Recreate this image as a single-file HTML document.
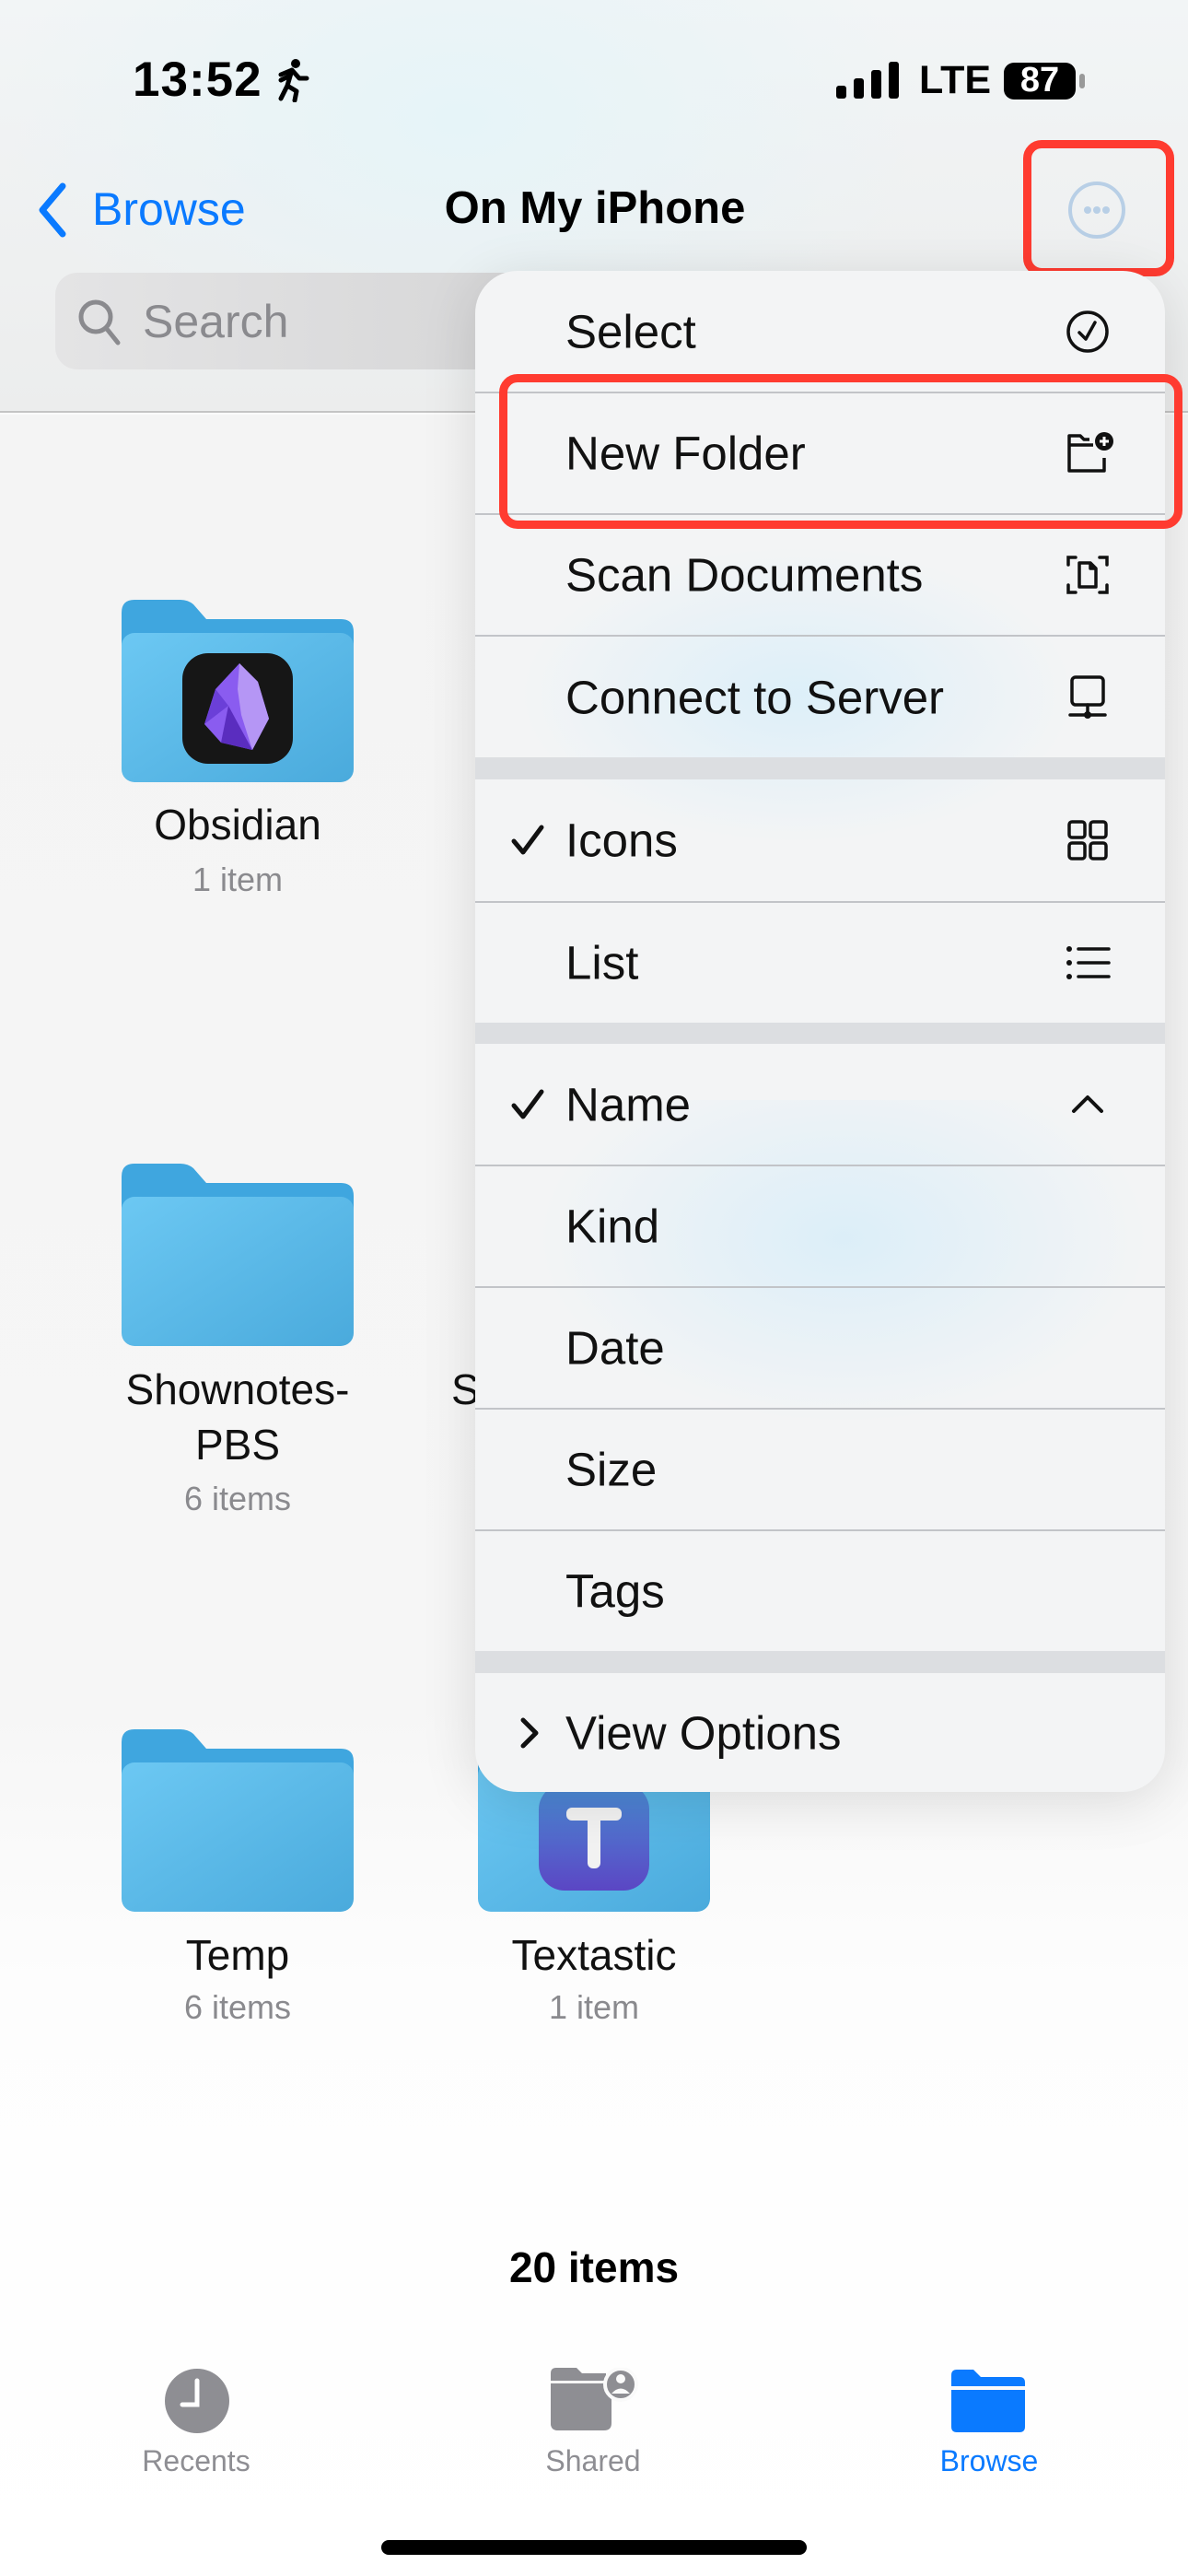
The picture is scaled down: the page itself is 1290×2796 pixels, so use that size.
<!DOCTYPE html>
<html><head><meta charset="utf-8">
<style>
*{margin:0;padding:0;box-sizing:border-box}
body{width:1290px;height:2796px;position:relative;overflow:hidden;font-family:"Liberation Sans",sans-serif;background:#fafafa}
.abs{position:absolute}
.hdr{left:0;top:0;width:1290px;height:448px;background:radial-gradient(ellipse 500px 300px at 500px 130px,#e6f4f8,rgba(238,240,240,0) ),linear-gradient(180deg,#f2f5f6,#eceded);border-bottom:2px solid #c4c4c4}
.main{left:0;top:450px;width:1290px;height:2346px;background:linear-gradient(180deg,#f4f4f4 0,#f6f6f6 1400px,#fdfdfd 1700px,#fff 2346px)}
.t{position:absolute;white-space:nowrap}
.menu{left:516px;top:294px;width:749px;height:1651px;border-radius:46px;overflow:hidden;background:#f3f4f5;box-shadow:0 10px 60px rgba(0,0,0,.12)}
.row{position:absolute;left:0;width:749px;border-top:2px solid #c2c4c8}
.row .l{position:absolute;left:98px;font-size:51px;color:#111;top:50%;transform:translateY(-50%)}
.row .ic{position:absolute;left:640px;top:50%;transform:translateY(-50%);width:50px;height:50px}
.gap{position:absolute;left:0;width:749px;height:24px;background:#dcdee1}
.ck{position:absolute;left:38px;top:50%;transform:translateY(-50%);width:40px;height:40px}
.red{border:9px solid #ff3b30;border-radius:20px}
.fn{font-size:46px;color:#111;text-align:center;width:300px}
.fs{font-size:36px;color:#8a8a8e;text-align:center;width:300px}
.tab{font-size:32px;text-align:center;width:200px}
</style></head><body>
<div class="abs hdr"></div>
<div class="abs main"></div>

<div class="t" style="left:144px;top:56px;font-size:53px;font-weight:bold;color:#000;letter-spacing:1px">13:52</div>
<svg class="abs" style="left:295px;top:63px" width="42" height="48" viewBox="0 0 42 48"><circle cx="26" cy="6" r="5" fill="#000"/><path d="M10 18 L22 13 L30 22 L38 22 M22 13 L17 30 L27 36 L25 46 M17 30 L10 44 M20 19 L10 24" stroke="#000" stroke-width="5" fill="none" stroke-linecap="round" stroke-linejoin="round"/></svg>
<svg class="abs" style="left:908px;top:67px" width="70" height="40"><rect x="0" y="26" width="11" height="14" rx="3" fill="#000"/><rect x="19" y="18" width="11" height="22" rx="3" fill="#000"/><rect x="38" y="9" width="11" height="31" rx="3" fill="#000"/><rect x="57" y="0" width="11" height="40" rx="3" fill="#000"/></svg>
<div class="t" style="left:998px;top:63px;font-size:43px;font-weight:bold;color:#000">LTE</div>
<div class="abs" style="left:1090px;top:68px;width:78px;height:40px;border-radius:11px;background:#000"></div>
<div class="t" style="left:1096px;top:66px;width:66px;text-align:center;font-size:38px;font-weight:bold;color:#fff">87</div>
<div class="abs" style="left:1172px;top:80px;width:6px;height:16px;border-radius:3px;background:#999"></div>

<svg class="abs" style="left:38px;top:198px" width="36" height="60"><path d="M30 4 L8 30 L30 56" stroke="#0a7aff" stroke-width="7" fill="none" stroke-linecap="round" stroke-linejoin="round"/></svg>
<div class="t" style="left:100px;top:198px;font-size:50px;color:#0a7aff">Browse</div>
<div class="t" style="left:400px;top:198px;width:492px;text-align:center;font-size:49px;font-weight:bold;color:#000">On My iPhone</div>
<div class="abs" style="left:1160px;top:197px;width:62px;height:62px;border-radius:50%;border:4px solid #b8cfe6"></div>
<div class="abs" style="left:1177px;top:224px;width:8px;height:8px;border-radius:50%;background:#b8cfe6"></div>
<div class="abs" style="left:1187px;top:224px;width:8px;height:8px;border-radius:50%;background:#b8cfe6"></div>
<div class="abs" style="left:1197px;top:224px;width:8px;height:8px;border-radius:50%;background:#b8cfe6"></div>
<div class="abs red" style="left:1111px;top:152px;width:164px;height:148px"></div>

<div class="abs" style="left:60px;top:296px;width:520px;height:105px;border-radius:24px;background:linear-gradient(90deg,#e4e4e5,#d6d6d7)"></div>
<svg class="abs" style="left:82px;top:322px" width="52" height="56"><circle cx="22" cy="22" r="16" stroke="#8a8a8e" stroke-width="5" fill="none"/><path d="M34 35 L46 50" stroke="#8a8a8e" stroke-width="5" stroke-linecap="round"/></svg>
<div class="t" style="left:155px;top:320px;font-size:50px;color:#8a8a8e">Search</div>

<svg width="0" height="0" style="position:absolute"><defs>
<linearGradient id="fg" x1="0" y1="0" x2="1" y2="1"><stop offset="0" stop-color="#6cc8f3"/><stop offset="1" stop-color="#4aaadc"/></linearGradient>
<symbol id="fold" viewBox="0 0 252 198"><path d="M14 0 H64 Q72 0 78 5 L92 21 H238 Q252 21 252 35 V60 H0 V14 Q0 0 14 0Z" fill="#3fa6df"/><rect x="0" y="36" width="252" height="162" rx="14" fill="url(#fg)"/></symbol>
</defs></svg>
<svg class="abs" style="left:132px;top:651px" width="252" height="198"><use href="#fold"/></svg>
<div class="abs" style="left:198px;top:709px;width:120px;height:120px;border-radius:28px;background:#161616"></div>
<svg class="abs" style="left:218px;top:718px" width="80" height="100" viewBox="0 0 80 100"><path d="M42 2 L62 22 L74 62 L56 96 L22 88 L4 68 L16 30Z" fill="#8a5cf0"/><path d="M42 2 L62 22 L74 62 L56 96 L44 58 L40 30Z" fill="#b596f5"/><path d="M4 68 L16 30 L30 48Z" fill="#6b3fd8"/><path d="M22 88 L30 48 L56 96Z" fill="#5a2dbf"/></svg>
<div class="t fn" style="left:108px;top:868px">Obsidian</div>
<div class="t fs" style="left:108px;top:934px">1 item</div>

<svg class="abs" style="left:132px;top:1263px" width="252" height="198"><use href="#fold"/></svg>
<div class="t fn" style="left:108px;top:1481px">Shownotes-</div>
<div class="t fn" style="left:108px;top:1541px">PBS</div>
<div class="t fs" style="left:108px;top:1606px">6 items</div>
<div class="t" style="left:490px;top:1481px;font-size:46px;color:#111">S</div>

<svg class="abs" style="left:132px;top:1877px" width="252" height="198"><use href="#fold"/></svg>
<div class="t fn" style="left:108px;top:2095px">Temp</div>
<div class="t fs" style="left:108px;top:2158px">6 items</div>

<svg class="abs" style="left:519px;top:1877px" width="252" height="198"><use href="#fold"/></svg>
<div class="abs" style="left:585px;top:1936px;width:120px;height:116px;border-radius:28px;background:linear-gradient(180deg,#4a8ed6,#5b46c4)"></div>
<div class="abs" style="left:615px;top:1962px;width:60px;height:14px;border-radius:6px;background:#f2f2f2"></div>
<div class="abs" style="left:638px;top:1962px;width:14px;height:66px;border-radius:6px;background:#f2f2f2"></div>
<div class="t fn" style="left:495px;top:2095px">Textastic</div>
<div class="t fs" style="left:495px;top:2158px">1 item</div>

<div class="abs menu">
 <div class="abs" style="left:0;top:300px;width:749px;height:500px;background:radial-gradient(ellipse 300px 160px at 350px 160px,rgba(215,238,250,.8),rgba(243,244,245,0))"></div>
 <div class="abs" style="left:0;top:900px;width:749px;height:500px;background:radial-gradient(ellipse 330px 200px at 400px 150px,rgba(210,236,250,.7),rgba(243,244,245,0))"></div>
 <div class="row" style="top:0;height:131px;border-top:none"><div class="l">Select</div>
  <svg class="ic" viewBox="0 0 50 50"><circle cx="25" cy="25" r="21" stroke="#111" stroke-width="3.5" fill="none"/><path d="M16 26 L23 33 L33 15" stroke="#111" stroke-width="3.5" fill="none" stroke-linecap="round" stroke-linejoin="round"/></svg></div>
 <div class="row" style="top:131px;height:132px"><div class="l">New Folder</div>
  <svg class="ic" viewBox="0 0 50 50" style="width:56px;left:638px"><path d="M26 10 H20 L16 6 H4 V44 H42 V30 M4 16 H30" stroke="#111" stroke-width="3.5" fill="none" stroke-linejoin="round"/><circle cx="42" cy="12" r="10" fill="#111"/><path d="M42 7 V17 M37 12 H47" stroke="#fff" stroke-width="3"/></svg></div>
 <div class="row" style="top:263px;height:132px"><div class="l">Scan Documents</div>
  <svg class="ic" viewBox="0 0 50 50"><path d="M4 14 V6 H12 M38 6 H46 V14 M46 36 V44 H38 M12 44 H4 V36" stroke="#111" stroke-width="3.5" fill="none" stroke-linecap="round"/><path d="M16 12 H28 L34 18 V38 H16Z M28 12 V18 H34" stroke="#111" stroke-width="3.5" fill="none" stroke-linejoin="round"/></svg></div>
 <div class="row" style="top:395px;height:133px"><div class="l">Connect to Server</div>
  <svg class="ic" viewBox="0 0 50 50"><rect x="8" y="3" width="34" height="30" rx="4" stroke="#111" stroke-width="3.5" fill="none"/><path d="M25 33 V42 M6 44 H44" stroke="#111" stroke-width="3.5" stroke-linecap="round"/><circle cx="25" cy="44" r="4" fill="#111"/></svg></div>
 <div class="gap" style="top:528px"></div>
 <div class="row" style="top:552px;height:132px;border-top:none"><div class="ck"><svg viewBox="0 0 40 40" width="40" height="40"><path d="M4 21 L14 33 L34 6" stroke="#111" stroke-width="5" fill="none" stroke-linecap="round" stroke-linejoin="round"/></svg></div><div class="l">Icons</div>
  <svg class="ic" viewBox="0 0 50 50"><rect x="5" y="5" width="17" height="17" rx="3" stroke="#111" stroke-width="3.5" fill="none"/><rect x="28" y="5" width="17" height="17" rx="3" stroke="#111" stroke-width="3.5" fill="none"/><rect x="5" y="28" width="17" height="17" rx="3" stroke="#111" stroke-width="3.5" fill="none"/><rect x="28" y="28" width="17" height="17" rx="3" stroke="#111" stroke-width="3.5" fill="none"/></svg></div>
 <div class="row" style="top:684px;height:132px"><div class="l">List</div>
  <svg class="ic" viewBox="0 0 50 50"><circle cx="5" cy="10" r="3" fill="#111"/><circle cx="5" cy="25" r="3" fill="#111"/><circle cx="5" cy="40" r="3" fill="#111"/><path d="M15 10 H48 M15 25 H48 M15 40 H48" stroke="#111" stroke-width="3.5" stroke-linecap="round"/></svg></div>
 <div class="gap" style="top:816px;height:23px"></div>
 <div class="row" style="top:839px;height:131px;border-top:none"><div class="ck"><svg viewBox="0 0 40 40" width="40" height="40"><path d="M4 21 L14 33 L34 6" stroke="#111" stroke-width="5" fill="none" stroke-linecap="round" stroke-linejoin="round"/></svg></div><div class="l">Name</div>
  <svg class="ic" viewBox="0 0 50 50"><path d="M10 32 L25 17 L40 32" stroke="#111" stroke-width="4" fill="none" stroke-linecap="round" stroke-linejoin="round"/></svg></div>
 <div class="row" style="top:970px;height:132px"><div class="l">Kind</div></div>
 <div class="row" style="top:1102px;height:132px"><div class="l">Date</div></div>
 <div class="row" style="top:1234px;height:132px"><div class="l">Size</div></div>
 <div class="row" style="top:1366px;height:132px"><div class="l">Tags</div></div>
 <div class="gap" style="top:1498px"></div>
 <div class="row" style="top:1522px;height:129px;border-top:none"><div class="ck"><svg viewBox="0 0 40 40" width="40" height="40"><path d="M14 6 L28 20 L14 34" stroke="#111" stroke-width="5" fill="none" stroke-linecap="round" stroke-linejoin="round"/></svg></div><div class="l">View Options</div></div>
</div>
<div class="abs red" style="left:542px;top:406px;width:742px;height:168px"></div>

<div class="t" style="left:445px;top:2434px;width:400px;text-align:center;font-size:46px;font-weight:bold;color:#000">20 items</div>
<svg class="abs" style="left:178px;top:2570px" width="72" height="72"><circle cx="36" cy="36" r="35" fill="#8e8e93"/><path d="M36 14 V40 H20" stroke="#fff" stroke-width="5" fill="none" stroke-linecap="round"/></svg>
<div class="t tab" style="left:113px;top:2653px;color:#8e8e93">Recents</div>
<svg class="abs" style="left:598px;top:2570px" width="95" height="75" viewBox="0 0 95 75"><path d="M6 0 H28 L34 6 H60 V60 Q60 68 52 68 H8 Q0 68 0 60 V6 Q0 0 6 0Z" fill="#8e8e93"/><rect x="0" y="14" width="66" height="3" fill="#f5f5f5"/><path d="M0 17 H66 V60 Q66 68 58 68 H8 Q0 68 0 60Z" fill="#8e8e93"/><circle cx="76" cy="18" r="17" fill="#8e8e93" stroke="#fafafa" stroke-width="4"/><circle cx="76" cy="12" r="5" fill="#fafafa"/><path d="M66 28 Q76 17 86 28" fill="#fafafa"/></svg>
<div class="t tab" style="left:544px;top:2653px;color:#8e8e93">Shared</div>
<svg class="abs" style="left:1033px;top:2572px" width="80" height="68" viewBox="0 0 80 68"><path d="M6 0 H24 L32 8 H74 Q80 8 80 14 V62 Q80 68 74 68 H6 Q0 68 0 62 V6 Q0 0 6 0Z" fill="#0a7aff"/><rect x="0" y="18" width="80" height="4" fill="#fafafa"/></svg>
<div class="t tab" style="left:974px;top:2653px;color:#0a7aff">Browse</div>
<div class="abs" style="left:414px;top:2757px;width:462px;height:16px;border-radius:8px;background:#000"></div>
</body></html>
